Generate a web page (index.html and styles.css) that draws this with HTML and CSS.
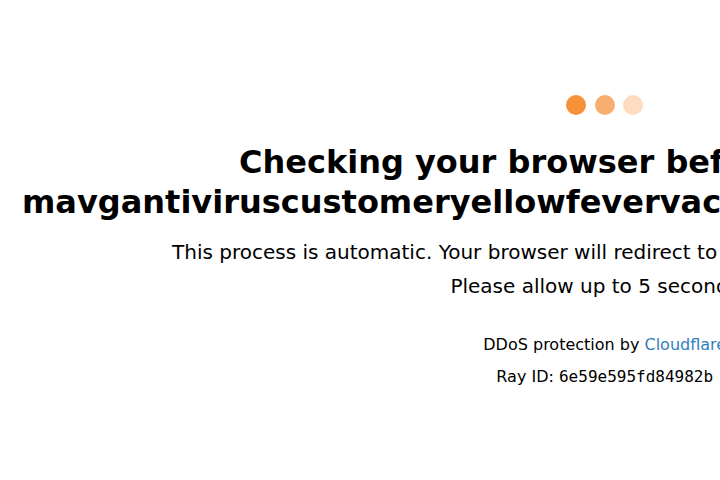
FILE: index.html
```html
<!DOCTYPE html>
<html lang="en">
<head>
<meta charset="utf-8">
<title>Just a moment...</title>
<link rel="stylesheet" href="styles.css">
</head>
<body>
<div class="page">
  <div class="content">
    <div class="bubbles">
      <span class="bubble bubble-1"></span>
      <span class="bubble bubble-2"></span>
      <span class="bubble bubble-3"></span>
    </div>
    <h1 class="title">Checking your browser before accessing <span class="domain">mavgantiviruscustomeryellowfevervaccinationbookings.com.au.</span></h1>
    <p class="text">This process is automatic. Your browser will redirect to your requested content shortly.</p>
    <p class="text">Please allow up to 5 seconds&hellip;</p>
    <div class="attribution">
      <div class="attr-line">DDoS protection by <a class="cf-link" href="#">Cloudflare</a></div>
      <div class="attr-line">Ray ID: <code class="ray">6e59e595fd84982b</code></div>
    </div>
  </div>
</div>
</body>
</html>
```

FILE: styles.css
```css
html, body {
  margin: 0;
  padding: 0;
  overflow: hidden;
  background: #ffffff;
}

body {
  color: #000000;
  font-family: "DejaVu Sans", sans-serif;
  font-size: 16px;
}

.page {
  display: flex;
  min-height: 100vh;
  padding: 0 22px;
}

.content {
  margin: auto;
  width: min-content;
  display: flex;
  flex-direction: column;
  align-items: stretch;
  text-align: center;
}

.bubbles {
  display: flex;
  justify-content: center;
  gap: 8.5px;
  padding: 8px 0 11px;
}

.bubble {
  width: 20px;
  height: 20px;
  border-radius: 50%;
}

.bubble-1 { background: #f69139; }
.bubble-2 { background: #f8ae6f; }
.bubble-3 { background: #fddcc2; }

.title {
  margin: 16px 0 13px;
  font-size: 32px;
  font-weight: 700;
  line-height: 40px;
}

.domain {
  padding-right: 2px;
}

.text {
  margin: 0;
  font-size: 20px;
  line-height: 34px;
  white-space: nowrap;
}

.attribution {
  margin-top: 26px;
  font-size: 16px;
  line-height: 32px;
}

.cf-link {
  color: #2f7ebd;
  text-decoration: none;
}

.ray {
  font-family: "DejaVu Sans Mono", monospace;
  font-size: 16px;
}
```
